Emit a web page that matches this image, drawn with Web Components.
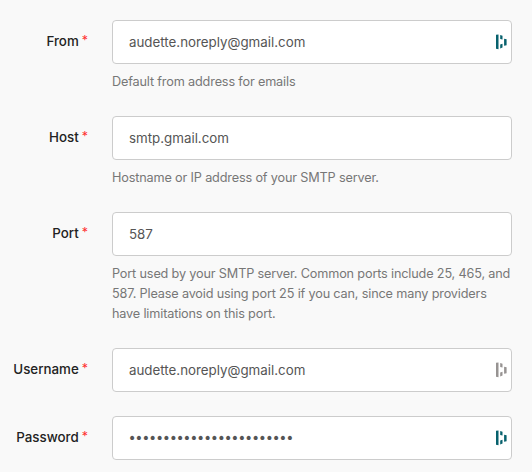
<!DOCTYPE html>
<html lang="en"><head><meta charset="utf-8"><title>SMTP settings</title>
<style>body{margin:0;background:#f9f9f9;font-family:Inter,"Liberation Sans",sans-serif}</style></head><body>
<smtp-form>
<form-row><span slot="label">From</span><text-field>audette.noreply@gmail.com<key-mark slot="mark"></key-mark></text-field><help-text slot="help">Default from address for emails</help-text></form-row>
<form-row><span slot="label">Host</span><text-field>smtp.gmail.com</text-field><help-text slot="help">Hostname or IP address of your SMTP server.</help-text></form-row>
<form-row><span slot="label">Port</span><text-field>587</text-field><help-text slot="help">Port used by your SMTP server. Common ports include 25, 465, and<br>587. Please avoid using port 25 if you can, since many providers<br>have limitations on this port.</help-text></form-row>
<form-row><span slot="label">Username</span><text-field>audette.noreply@gmail.com<key-mark slot="mark" style="color:#979392"></key-mark></text-field></form-row>
<form-row><span slot="label">Password</span><text-field class="secret">••••••••••••••••••••••••<key-mark slot="mark"></key-mark></text-field></form-row>
</smtp-form>
<script>
const define=(name,html)=>customElements.define(name,class extends HTMLElement{
  constructor(){super();this.attachShadow({mode:'open'}).innerHTML=html;}
});
define('key-mark',`<style>:host{display:block;width:11px;height:16px;color:#07616d}svg{display:block}</style>
<svg width="11" height="16" viewBox="0 0 11 16" fill="currentColor"><path d="M0 .8 2.5 .4V15.2L0 14.8zM4.2 1 6.5 1.8V5.6L4.2 5zM8.1 4.7 10.6 5.3V11.2L8.1 11.8zM4.2 10.4 6.5 9.8V13.6L4.2 14.4z"/></svg>`);
define('text-field',`<style>:host{display:flex;align-items:center;justify-content:space-between;box-sizing:border-box;height:44px;padding:0 4px 0 16px;border:1px solid #ccc;border-radius:4px;background:#fff;color:#555;font-size:13.33px;line-height:20px;white-space:nowrap}
:host(.secret) .value{font-family:"DejaVu Sans",sans-serif;font-size:14px;letter-spacing:-1.4px;margin-left:-1px}</style><span class="value"><slot></slot></span><slot name="mark"></slot>`);
define('help-text',`<style>:host{display:block;padding-top:8px;font-size:12.7px;line-height:20px;letter-spacing:-.165px;color:#777;white-space:nowrap}</style><slot></slot>`);
define('form-row',`<style>:host{display:grid;grid-template-columns:88px 400px;column-gap:24px}
.label{display:flex;justify-content:flex-end;gap:3px;padding-top:11px;font-size:13.33px;font-weight:500;line-height:20px;color:#222;white-space:nowrap}
.star{color:#ff3030;font-weight:400;font-size:12.5px}</style>
<div class="label"><slot name="label"></slot><span class="star">*</span></div><div><slot></slot><slot name="help"></slot></div>`);
define('smtp-form',`<style>:host{display:flex;flex-direction:column;gap:24px;padding-top:20px}</style><slot></slot>`);
</script></body></html>
